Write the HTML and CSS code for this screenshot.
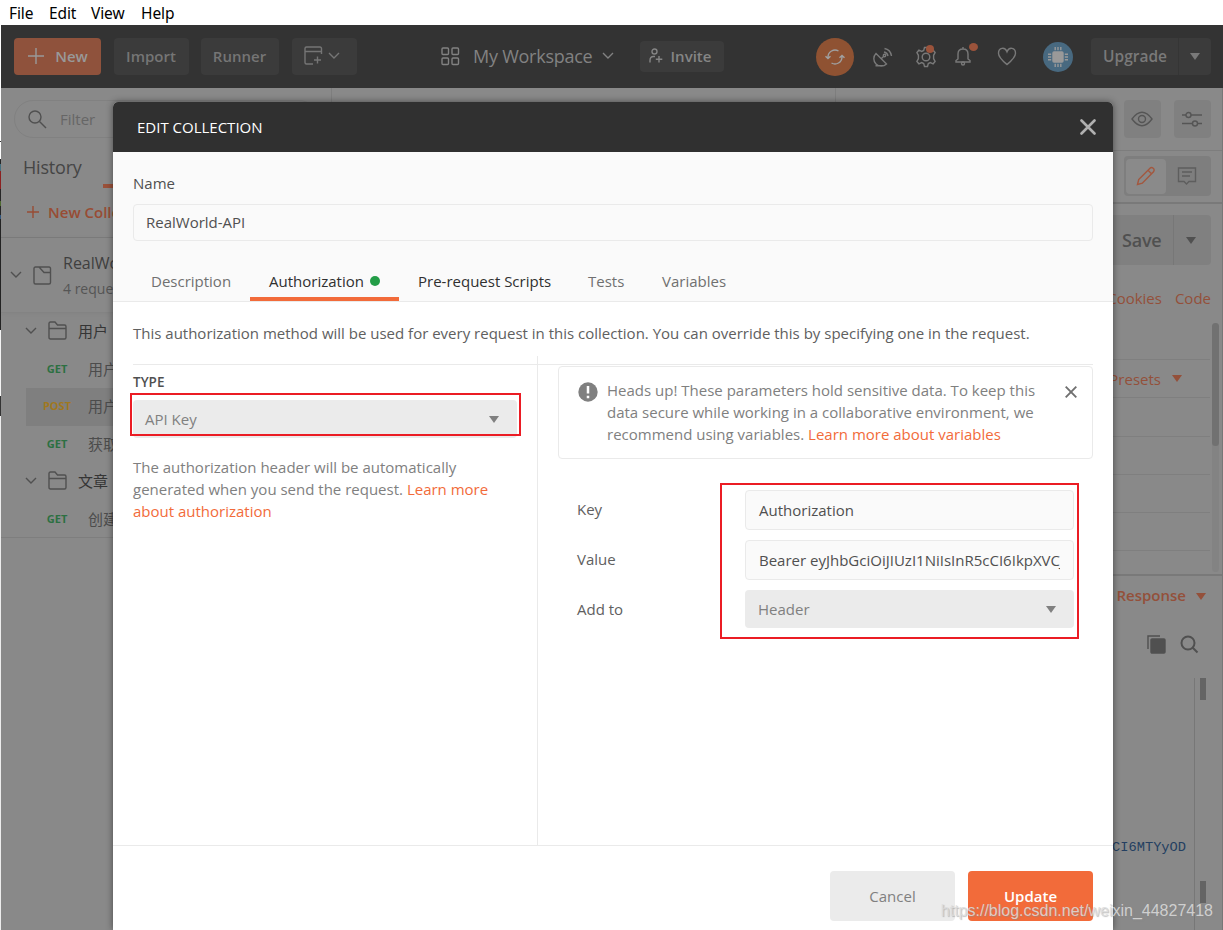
FILE: index.html
```html
<!DOCTYPE html>
<html lang="en">
<head>
<meta charset="utf-8">
<title>Edit Collection</title>
<link rel="stylesheet" href="styles.css">
</head>
<body>
<nav class="menubar"><span class="m-file">File</span><span class="m-edit">Edit</span><span class="m-view">View</span><span class="m-help">Help</span></nav>
<div class="app">
  <header class="topbar">
    <button class="btn new"><svg width="16" height="16" viewBox="0 0 16 16"><path d="M8 0v16M0 8h16"/></svg>New</button>
    <button class="btn import">Import</button>
    <button class="btn runner">Runner</button>
    <button class="btn window">
      <svg width="19" height="19" viewBox="0 0 19 19"><path d="M17.500 8V2.500a1.500 1.500 0 0 0-1.500-1.500H2.500A1.500 1.500 0 0 0 1 2.500v14A1.500 1.500 0 0 0 2.500 18H9M1 5.500h16.500M13.500 10.500v7M10 14h7"/></svg>
      <svg width="12" height="8" viewBox="0 0 12 8"><path d="M1 1l5 5 5-5"/></svg>
    </button>
    <div class="workspace">
      <svg width="19" height="19" viewBox="0 0 19 19"><rect x="1" y="1" width="6.500" height="6.500" rx="1"/><rect x="11" y="1" width="6.500" height="6.500" rx="1"/><rect x="1" y="11" width="6.500" height="6.500" rx="1"/><rect x="11" y="11" width="6.500" height="6.500" rx="1"/></svg>
      <span>My Workspace</span>
      <svg width="12" height="8" viewBox="0 0 12 8"><path d="M1 1l5 5 5-5"/></svg>
    </div>
    <button class="btn invite"><svg width="14" height="16" viewBox="0 0 14 16"><circle cx="5.500" cy="3.500" r="2.500"/><path d="M1 14.500V12.500Q1 8.500 4.500 8.500H6M10 8v6.500M6.800 11.200h6.500"/></svg>Invite</button>
    <div class="sync"><svg width="20" height="18" viewBox="0 0 20 18"><path d="M3 10V9A7 7 0 0 1 13.500 3M17 8v1A7 7 0 0 1 6.500 15M.5 8.200L3 10.500l2.500-2.300M14.500 9.800L17 7.500l2.500 2.300"/></svg></div>
    <svg class="dish" width="20" height="20" viewBox="0 0 20 20"><path d="M3 6.500a7 7 0 1 0 10.500 10.500zM2.500 18.700H10M8 12l3-3M11 5A5 5 0 0 1 15 9M11.500 1.500Q17.500 2.500 18.500 9"/><circle cx="11.500" cy="8.500" r="1.200"/></svg>
    <div class="alert gear"><svg width="20" height="22" viewBox="0 0 20 22"><circle cx="10" cy="11" r="3.800"/><path d="M8.500 1.500h3l.8 3 2 .9 2.800-1.200 2 2.400-1.500 2.700v3.400l1.500 2.700-2 2.400-2.800-1.200-2 .9-.8 3h-3l-.8-3-2-.9-2.800 1.200-2-2.400 1.500-2.700V9.300L.9 6.600l2-2.400 2.800 1.200 2-.9z"/></svg></div>
    <div class="alert bell"><svg width="16" height="20" viewBox="0 0 16 20"><path d="M1 16V14.500L3 13V8Q3 3 8 3t5 5v5l2 1.500V16zM8 1v2"/><circle cx="8" cy="17.500" r="1.500"/></svg></div>
    <svg class="heart" width="20" height="19" viewBox="0 0 20 19"><path d="M10 17.500C7 15 1.500 10.500 1.500 6.200C1.500 .5 8-.5 10 4.800C12-.5 18.500 .5 18.500 6.200C18.500 10.500 13 15 10 17.500z"/></svg>
    <div class="avatar"><svg width="20" height="20" viewBox="0 0 20 20"><rect x="5" y="5" width="10" height="10" rx="1"/><path d="M7.200 0v3.200M10 0v3.200M12.800 0v3.200M7.200 16.800V20M10 16.800V20M12.800 16.800V20M0 7.200h3.200M0 10h3.200M0 12.800h3.200M16.800 7.200H20M16.800 10H20M16.800 12.800H20"/></svg></div>
    <div class="upgrade"><span>Upgrade</span><i class="tri"></i></div>
  </header>
  <div class="content">
    <aside class="sidebar">
      <div class="filter"><svg width="19" height="19" viewBox="0 0 19 19"><circle cx="7" cy="7" r="6"/><path d="M11.500 11.500l6.500 6.500"/></svg>Filter</div>
      <div class="side-tabs"><span>History</span><span class="current"></span></div>
      <div class="new-coll"><svg width="12" height="12" viewBox="0 0 12 12"><path d="M6 0v12M0 6h12"/></svg>New Collection</div>
      <div class="collection">
        <svg width="12" height="8" viewBox="0 0 12 8"><path d="M1 1l5 5 5-5"/></svg>
        <svg class="coll-icon" width="19" height="19" viewBox="0 0 19 19"><path d="M6 1H2.500Q1 1 1 2.500v14Q1 18 2.500 18h13.500q1.500 0 1.500-1.500V2.500Q17.500 1 16 1H6l5 5.500h6.500"/></svg>
        <div><b>RealWorld-API</b><small>4 requests</small></div>
      </div>
      <div class="tree">
        <div class="folder"><svg width="12" height="8" viewBox="0 0 12 8"><path d="M1 1l5 5 5-5"/></svg><svg width="19" height="19" viewBox="0 0 19 19"><path d="M1 7.500h17M2.500 1H7l2.500 3H16.500Q18 4 18 5.500v11Q18 18 16.500 18h-14Q1 18 1 16.500v-14Q1 1 2.500 1z"/></svg>用户</div>
        <div class="req"><em>GET</em>用户</div>
        <div class="req selected"><em class="post">POST</em>用户</div>
        <div class="req"><em>GET</em>获取</div>
        <div class="folder"><svg width="12" height="8" viewBox="0 0 12 8"><path d="M1 1l5 5 5-5"/></svg><svg width="19" height="19" viewBox="0 0 19 19"><path d="M1 7.500h17M2.500 1H7l2.500 3H16.500Q18 4 18 5.500v11Q18 18 16.500 18h-14Q1 18 1 16.500v-14Q1 1 2.500 1z"/></svg>文章</div>
        <div class="req"><em>GET</em>创建</div>
      </div>
    </aside>
    <main class="main">
      <div class="env">
        <div class="env-left"></div>
        <button class="tool"><svg width="22" height="16" viewBox="0 0 22 16"><path d="M1 8Q11-5.500 21 8Q11 21.500 1 8z"/><circle cx="11" cy="8" r="3.500"/></svg></button>
        <button class="tool"><svg width="22" height="16" viewBox="0 0 22 16"><path d="M1 4h4M10 4h11M1 12.500h10.500M16.500 12.500H21"/><circle cx="7.500" cy="4" r="2.500"/><circle cx="14" cy="12.500" r="2.500"/></svg></button>
      </div>
      <div class="mode"><div class="toggle">
        <div class="on"><svg width="20" height="20" viewBox="0 0 20 20"><path d="M1.500 18.500l1.200-5L14 2.200q1.500-1.400 3.200.1t.3 3.500L6.300 17.200zM12 4.200l3.700 3.700"/></svg></div>
        <div class="off"><svg width="20" height="20" viewBox="0 0 20 20"><path d="M1.500 2h17v13.500H12l-2.500 2.500L7 15.500H1.500zM5 6h10M5 10h8"/></svg></div>
      </div></div>
      <div class="save-row"><div class="save"><span>Save</span><i class="tri"></i></div></div>
      <div class="links"><span>Cookies</span><span>Code</span></div>
      <div class="params">
        <div class="grid"><div class="cell first"></div><div class="cell presets">Presets<i class="tri"></i></div><div class="cell"></div><div class="cell"></div><div class="cell"></div><div class="cell"></div><div class="cell last"></div></div>
        <div class="track"><div class="thumb"></div></div>
      </div>
      <div class="response">Response<i class="tri"></i></div>
      <div class="res-tools">
        <svg width="19" height="19" viewBox="0 0 19 19"><path d="M1 14V1h12" class="line"/><rect x="4" y="4" width="14" height="14" rx="1"/></svg>
        <svg class="find" width="19" height="19" viewBox="0 0 19 19"><circle cx="8" cy="8" r="6.500"/><path d="M12.500 12.500l5 5"/></svg>
      </div>
      <div class="code"><span>CI6MTYyOD</span><div class="minimap"><i></i><i></i></div></div>
    </main>
  </div>

  <section class="modal">
    <header class="modal-head"><span>EDIT COLLECTION</span><svg width="16" height="16" viewBox="0 0 16 16"><path d="M1.500 1.500l13 13M14.500 1.500l-13 13"/></svg></header>
    <div class="modal-top">
      <label>Name</label>
      <div class="name-input">RealWorld-API</div>
      <div class="tabs">
        <span class="t-desc">Description</span><span class="t-auth">Authorization<i></i></span><span class="t-pre">Pre-request Scripts</span><span class="t-test">Tests</span><span class="t-var">Variables</span>
      </div>
    </div>
    <p class="intro">This authorization method will be used for every request in this collection. You can override this by specifying one in the request.</p>
    <div class="split">
      <div class="type-pane">
        <h4>TYPE</h4>
        <div class="select type-select"><span>API Key</span><i class="tri"></i><div class="mark"></div></div>
        <p>The authorization header will be automatically<br>generated when you send the request. <a>Learn more<br>about authorization</a></p>
      </div>
      <div class="key-pane">
        <div class="notice">
          <svg class="bang" width="20" height="20" viewBox="0 0 20 20"><circle cx="10" cy="10" r="9.700"/><path d="M10 4v7.500M10 13.800v2.400"/></svg>
          <p>Heads up! These parameters hold sensitive data. To keep this<br>data secure while working in a collaborative environment, we<br>recommend using variables. <a>Learn more about variables</a></p>
          <svg class="close" width="12" height="12" viewBox="0 0 12 12"><path d="M.7.7l10.600 10.600M11.300.7L.7 11.300"/></svg>
        </div>
        <div class="form">
          <label>Key</label><div class="input">Authorization</div>
          <label>Value</label><div class="input value"><span>Bearer eyJhbGciOiJIUzI1NiIsInR5cCI6IkpXVCJ9</span></div>
          <label>Add to</label><div class="select"><span>Header</span><i class="tri"></i></div>
          <div class="mark"></div>
        </div>
      </div>
    </div>
    <footer class="modal-foot"><button class="cancel">Cancel</button><button class="update">Update</button></footer>
  </section>
  <div class="watermark">https://blog.csdn.net/weixin_44827418</div>
</div>
</body>
</html>
```
FILE: styles.css
```css
* { box-sizing: border-box; }
body { margin: 0; width: 1223px; height: 930px; overflow: hidden; background: linear-gradient(#fff 141px, #333 141px 142px, #fff 142px 159px, #262626 159px 164px, #467080 164px 171px, #8c2020 171px 189px, #262626 189px 201px, #4e6a30 201px 206px, #262626 206px 215px, #31557c 215px 219px, #222 219px 330px, #f4f4f4 330px 396px, #333 396px 416px, #ececec 416px); font: 15px "Open Sans", "Noto Sans CJK SC", sans-serif; color: #505050; }
button { border: 0; padding: 0; font: inherit; color: inherit; }
svg { display: block; flex: none; fill: none; stroke: currentColor; stroke-width: 1.4; }
p, h4 { margin: 0; }
i, em { font-style: normal; }
.tri { flex: none; width: 0; height: 0; border: 5.500px solid transparent; border-top: 7px solid currentColor; border-bottom: 0; }

.menubar { height: 25px; display: flex; align-items: center; padding: 2px 0 0 9px; background: #fff; color: #000; font: 15.500px/25px "Noto Sans", sans-serif; }
.menubar span { white-space: nowrap; letter-spacing: -.1px; }
.m-file { width: 40px; }
.m-edit { width: 42px; }
.m-view { width: 50px; }

.app { position: relative; height: 905px; margin-left: 1px; overflow: hidden; background: #898989; }
.topbar { height: 63px; display: flex; align-items: center; padding-left: 13px; background: #333; color: #797979; }
.btn { height: 37px; display: flex; align-items: center; justify-content: center; padding: 0 1px 2px 0; border-radius: 4px; background: #3b3b3b; font-weight: 600; color: #757575; }
.btn.new { width: 87px; gap: 11px; padding-left: 2px; background: #8f523c; color: #999; }
.btn.import { width: 75px; margin-left: 13px; }
.btn.runner { width: 78px; margin-left: 12px; }
.btn.window { width: 65px; margin-left: 13px; gap: 5px; padding-right: 5px; }
.workspace { display: flex; align-items: center; width: 174px; margin-left: 84px; padding-bottom: 1px; font-size: 18px; color: #828282; }
.workspace span { width: 120px; margin: 0 9px 0 13px; white-space: nowrap; letter-spacing: -.25px; font-weight: 500; }
.btn.invite { width: 84px; height: 31px; margin-left: 25px; gap: 8px; padding-right: 4px; color: #858585; }
.sync { width: 38px; height: 38px; margin-left: 92px; display: grid; place-items: center; border-radius: 50%; background: #8f5232; color: #a0a0a0; }
.dish { margin-left: 19px; }
.alert { position: relative; }
.alert::after { content: ""; position: absolute; width: 8px; height: 8px; border-radius: 50%; background: #9b533b; }
.gear { margin-left: 23px; }
.gear::after { left: 10px; top: -1px; }
.bell { margin-left: 19px; }
.bell::after { left: 14px; top: -4px; width: 9px; }
.bell svg { position: relative; top: -1px; }
.heart { margin-left: 26px; }
.avatar { width: 30px; height: 30px; margin-left: 26px; display: grid; place-items: center; border-radius: 50%; background: #486980; color: #999; }
.avatar rect { fill: currentColor; }
.upgrade { display: flex; align-items: center; width: 120px; height: 37px; margin-left: 18px; border-radius: 4px; background: #3b3b3b; font-weight: 600; font-size: 15.500px; }
.upgrade span { width: 88px; padding-left: 12px; line-height: 37px; border-right: 1px solid #353535; }
.upgrade .tri { margin-left: 11px; }

.content { display: flex; height: 842px; }
.sidebar { width: 331px; border-right: 1px solid #7e7e7e; color: #505050; }
.filter { width: 304px; height: 38px; margin: 12px 0 0 13px; display: flex; align-items: center; gap: 13px; padding-left: 13px; border: 1px solid #818181; border-radius: 19px; font-size: 15px; color: #666; }
.filter svg { color: #505050; }
.side-tabs { display: flex; height: 50px; padding-left: 22px; font-size: 18px; line-height: 59px; letter-spacing: -.2px; color: #454545; }
.side-tabs span:first-child { width: 80px; }
.side-tabs .current { width: 90px; border-bottom: 4px solid #9a513a; }
.new-coll { height: 50px; display: flex; align-items: center; gap: 9px; padding: 0 0 2px 26px; border-bottom: 1px solid #7b7b7b; color: #984c34; font-weight: 600; white-space: nowrap; }
.collection { height: 75px; display: flex; align-items: center; padding-left: 9px; box-shadow: 0 2px 4px #80808060; border-bottom: 1px solid #838383; }
.coll-icon { margin: 0 11px; }
.collection b, .collection small { display: block; white-space: nowrap; font-weight: 400; font-size: 16px; line-height: 25px; color: #3f3f3f; }
.collection div { padding-top: 2px; }
.collection small { font-size: 14px; color: #555; }
.tree { height: 225px; border-bottom: 1px solid #7e7e7e; }
.folder, .req { height: 37.500px; display: flex; align-items: center; padding-bottom: 2px; }
.folder { padding-left: 24px; gap: 11px; color: #353535; }
.folder svg { color: #505050; }
.req { margin-left: 25px; color: #4c4c4c; }
.req em { width: 62px; text-align: center; font-size: 11px; font-weight: 700; color: #2c7042; }
.req .post { color: #a0781f; }
.selected { background: #7f7f7f; }

.main { flex: 1; border-right: 1px solid #777; display: flex; flex-direction: column; }
.env { height: 63px; display: flex; gap: 13px; padding: 12px 11px 0 0; border-bottom: 1px solid #7d7d7d; }
.env-left { width: 504px; margin: -12px auto 0 0; border-right: 1px solid #7e7e7e; }
.tool { width: 37px; height: 38px; display: grid; place-items: center; padding-right: 1px; border-radius: 4px; background: #808080; color: #555; }
.mode { height: 53px; padding: 5px 11px 0 0; border-bottom: 2px solid #797979; }
.toggle { width: 87px; height: 40px; margin-left: auto; display: flex; align-items: center; padding: 2px; border-radius: 4px; background: #7e7e7e; }
.on, .off { width: 40px; height: 35px; display: grid; place-items: center; border-radius: 4px; }
.on { background: #8a8a8a; color: #a3573e; }
.off { margin-left: 1px; color: #5e5e5e; }
.save-row { height: 61px; padding: 11px 11px 0 0; }
.save { width: 120px; height: 50px; margin-left: auto; display: flex; align-items: center; border-radius: 4px; background: #808080; color: #505050; }
.save span { width: 83px; padding-left: 31px; border-right: 1px solid #777; font-size: 18px; font-weight: 600; line-height: 50px; letter-spacing: -.2px; }
.save .tri { margin-left: 12px; }
.links { height: 58px; display: flex; justify-content: flex-end; gap: 13px; padding: 0 11px 0 0; line-height: 67px; color: #94503a; }
.params { height: 253px; display: flex; border-bottom: 2px solid #797979; }
.grid { flex: 1; }
.cell { height: 38.300px; border-bottom: 1px solid #7f7f7f; }
.cell.first { height: 37px; }
.cell.last { border: 0; }
.presets { display: flex; align-items: center; justify-content: flex-end; gap: 11px; padding-right: 28px; color: #94503a; }
.track { width: 7px; height: 249px; margin: 0 3px 0 2px; border-radius: 4px; background: #838383; }
.thumb { height: 123px; border-radius: 4px; background: #717171; }
.response { height: 39px; display: flex; align-items: center; justify-content: flex-end; gap: 10px; padding: 0 16px 2px 0; font-weight: 600; color: #94503a; }
.response .tri { margin-top: 3px; }
.res-tools { display: flex; justify-content: flex-end; gap: 14px; height: 63px; padding: 20px 23px 0 0; color: #505050; }
.res-tools rect { fill: currentColor; }
.res-tools .find { stroke-width: 2; }
.code { flex: 1; display: flex; justify-content: flex-end; color: #243f61; font: 13.700px/18px "Liberation Mono", monospace; }
.code span { margin: 161px 8px 0 0; }
.minimap { width: 28px; border-left: 1px solid #777; padding-left: 5px; }
.minimap i { display: block; width: 6px; height: 22px; background: #646464; }
.minimap i + i { margin-top: 181px; }

.modal { position: absolute; left: 112px; top: 77px; width: 1000px; height: 828px; border-radius: 5px 5px 0 0; background: #fff; box-shadow: 0 0 7px #0007; }
.modal-head { height: 50px; display: flex; align-items: center; justify-content: space-between; padding: 0 17px 0 24px; border-radius: 5px 5px 0 0; background: #303030; color: #fff; font-weight: 500; }
.modal-head span { padding-bottom: 1px; }
.modal-head svg { stroke-width: 2.600; stroke: #b0b0b0; stroke-linecap: round; }
.modal-top { height: 150px; padding: 20px 20px 0; background: #fafafa; border-bottom: 1px solid #eaeaea; }
.modal-top label { display: block; height: 32px; line-height: 23px; }
.name-input { height: 37px; padding-left: 12px; border: 1px solid #eaeaea; border-radius: 4px; line-height: 35px; }
.tabs { display: flex; height: 60px; padding-left: 18px; line-height: 81px; color: #707070; white-space: nowrap; }
.t-desc { width: 99px; }
.t-auth { display: flex; align-items: center; width: 149px; padding: 23px 0 0 19px; border-bottom: 4px solid #f26b3a; line-height: 56px; color: #303030; }
.t-auth i { width: 10px; height: 10px; margin-left: 6px; border-radius: 50%; background: #239d47; }
.t-pre { width: 189px; padding-left: 19px; color: #303030; }
.t-test { width: 74px; }
.intro { height: 63px; margin: 0 20px; border-bottom: 1px solid #eaeaea; line-height: 63px; white-space: nowrap; color: #606060; }
.split { display: flex; height: 489px; margin-top: -9px; }
.type-pane { width: 425px; padding: 18px 19px 0 20px; border-right: 1px solid #eaeaea; color: #808080; }
.type-pane h4 { height: 26px; line-height: 17px; font-size: 13.500px; font-weight: 600; color: #505050; }
.type-pane p { margin-top: 18px; line-height: 22px; white-space: nowrap; }
.select { position: relative; height: 38px; display: flex; align-items: center; justify-content: space-between; padding: 0 18px 0 13px; border-radius: 4px; background: #ebebeb; color: #808080; }
.type-select { width: 384px; padding-left: 12px; }
a { color: #f26b3a; }
.mark { position: absolute; border: 2px solid #eb1c24; }
.type-select .mark { left: -3px; top: -7px; width: 391px; height: 43px; }
.key-pane { flex: 1; padding: 10px 20px 0; }
.notice { height: 93px; display: flex; padding: 12px 15px 0 19px; border: 1px solid #eaeaea; border-radius: 4px; color: #808080; line-height: 22px; white-space: nowrap; }
.notice p { flex: 1; margin-left: 9px; }
.bang { margin-top: 3px; fill: #808080; stroke: none; }
.bang path { stroke: #fff; stroke-width: 2.500; }
.notice .close { margin-top: 7px; stroke-width: 1.900; color: #707070; }
.form { position: relative; display: grid; grid-template-columns: 168px 329px; grid-template-rows: 40px 40px 38px; row-gap: 10px; margin: 31px 0 0 19px; line-height: 39px; color: #606060; }
.input { height: 40px; padding: 0 13px; overflow: hidden; border: 1px solid #eaeaea; border-radius: 4px; background: #fafafa; line-height: 39px; color: #505050; }
.input span { display: block; overflow: hidden; white-space: nowrap; }
.form .mark { left: 143px; top: -7px; width: 359px; height: 156px; }
.modal-foot { height: 85px; display: flex; justify-content: flex-end; gap: 13px; padding: 25px 20px 0 0; border-top: 1px solid #eaeaea; }
.modal-foot button { width: 125px; height: 50px; border-radius: 4px; }
.cancel { background: #ebebeb; color: #808080; }
.modal-foot .update { background: #f26b3a; color: #fff; font-weight: 600; }
.watermark { position: absolute; right: 10px; bottom: 9px; color: #ddddddd9; font: 16px/20px "Liberation Sans", sans-serif; text-shadow: 1px 1px 1px #8888; white-space: nowrap; }
```
